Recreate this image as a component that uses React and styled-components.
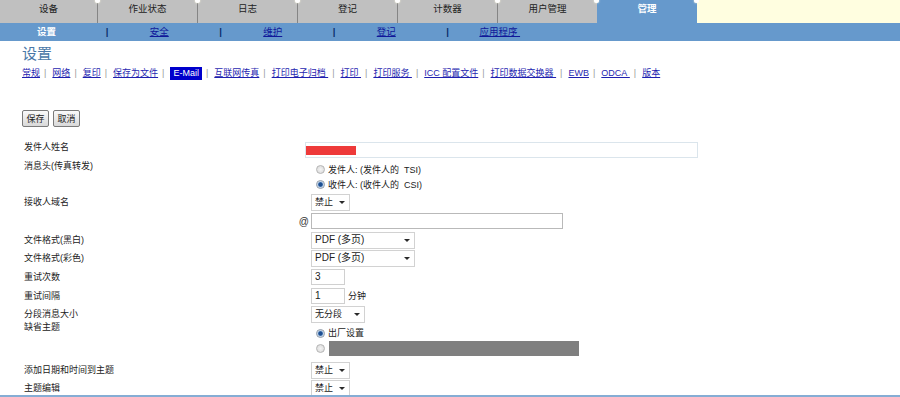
import React from 'react';
import styled, { createGlobalStyle, css } from 'styled-components';

//Styles

const GlobalStyle = createGlobalStyle`
  html, body {
    margin: 0;
    padding: 0;
    background: #fff;
  }
  body {
    font-family: "Liberation Sans", "Noto Sans CJK SC", sans-serif;
    font-size: 9px;
    color: #222;
  }
`;

const dot = css`
  &::before {
    content: '';
    position: absolute;
    top: -2px;
    left: -3px;
    width: 5px;
    height: 5px;
    border-radius: 50%;
    background: #fff;
    box-shadow: 0 0 2px #fffbe0;
  }
`;

//Components

const Frame = styled('div')`
  height: 397px;
  box-sizing: border-box;
  border-bottom: 2px solid #86add4;
  overflow: hidden;
`;

const TabBar = styled('div')`
  display: flex;
  height: 23px;
`;

const Tab = styled('div')`
  position: relative;
  flex: none;
  box-sizing: border-box;
  width: ${(p) => (p.$first ? 97 : 100)}px;
  padding-top: 3px;
  font-size: 9.5px;
  line-height: 12px;
  text-align: center;
  background: ${(p) => (p.$active ? '#6699cc' : '#c0c0c0')};
  color: ${(p) => (p.$active ? '#fff' : '#222')};
  font-weight: ${(p) => (p.$active ? 'bold' : 'normal')};
  ${(p) => !p.$first && !p.$active && css`border-left: 1px solid #858585;`}
  ${(p) => !p.$first && dot}
`;

const TabFiller = styled('div')`
  position: relative;
  flex: 1;
  background: #fffee0;
  ${dot}
`;

const SubBar = styled('div')`
  display: flex;
  align-items: center;
  height: 18px;
  background: #6699cc;
  font-size: 9.5px;
  line-height: 12px;
`;

const SubCurrent = styled('span')`
  width: 93px;
  text-align: center;
  color: #fff;
  font-weight: bold;
`;

const SubPipe = styled('span')`
  width: 28px;
  text-align: center;
  color: #0b2d6b;
  font-weight: bold;
`;

const SubLink = styled('a')`
  box-sizing: border-box;
  width: 85.5px;
  padding-right: 9px;
  text-align: center;
  color: #10189a;
  text-decoration: underline;
  cursor: pointer;
`;

const Main = styled('div')`
  padding-left: 22px;
`;

const Title = styled('h1')`
  margin: 3px 0 0;
  font-family: "Noto Sans CJK SC", sans-serif;
  font-size: 15px;
  line-height: 18px;
  font-weight: normal;
  color: #4a78a8;
`;

const NavRow = styled('div')`
  display: flex;
  align-items: center;
  margin-top: 4px;
  height: 14px;
  font-size: 9px;
  line-height: 13px;
`;

const NavLink = styled('a')`
  color: #1f1fb0;
  text-decoration: underline;
  cursor: pointer;
  white-space: pre;
  ${(p) =>
    p.$active &&
    css`
      padding: 0 3px;
      background: #0000cc;
      color: #fff;
      text-decoration: none;
    `}
`;

const NavSep = styled('span')`
  margin: 0 6px 0 4px;
  color: #999;
`;

const ButtonRow = styled('div')`
  display: flex;
  gap: 4px;
  margin-top: 30px;
`;

const Btn = styled('button')`
  width: 27px;
  height: 17px;
  padding: 0;
  border: 1px solid #7a7a7a;
  border-radius: 2px;
  background: linear-gradient(#fafafa, #d9d9d9);
  font-family: inherit;
  font-size: 9px;
  color: #222;
`;

const Form = styled('div')`
  display: grid;
  grid-template-columns: 287px 1fr;
  margin: 14px 0 0 2px;
`;

const Label = styled('div')`
  align-self: ${(p) => (p.$top ? 'start' : 'center')};
  margin-top: ${(p) => p.$shift || 0}px;
  line-height: 12px;
  color: #222;
`;

const AtLabel = styled('div')`
  align-self: center;
  padding-right: 2px;
  text-align: right;
  font-size: 10px;
  color: #333;
`;

const Cell = styled('div')`
  display: flex;
  flex-direction: ${(p) => (p.$column ? 'column' : 'row')};
  align-items: ${(p) => (p.$column ? 'stretch' : 'center')};
  box-sizing: border-box;
  height: ${(p) => p.$h}px;
  padding-top: ${(p) => p.$pt || 0}px;
`;

const SenderBox = styled('div')`
  align-self: flex-start;
  box-sizing: border-box;
  width: 393px;
  height: 16px;
  margin: 1px 0 0 -6px;
  border: 1px solid #dbe5ec;
`;

const Redact = styled('div')`
  width: 50px;
  height: 9px;
  margin: 3px 0 0 0;
  background: #ee3a3a;
`;

const RadioLine = styled('label')`
  display: flex;
  align-items: center;
  height: ${(p) => p.$h}px;
  line-height: 12px;
`;

const Radio = styled('span')`
  flex: none;
  box-sizing: border-box;
  width: 9px;
  height: 9px;
  margin: 0 3px 0 5px;
  border-radius: 50%;
  border: 1px solid ${(p) => (p.$checked ? '#8f9aa8' : '#b5b5b5')};
  background: ${(p) =>
    p.$checked
      ? 'radial-gradient(circle, #1d4f91 0 1.8px, #9dbde2 2.6px, #f2f2f2 3.6px)'
      : 'radial-gradient(circle, #f4f4f4 0, #dcdcdc 4px)'};
`;

const SelectBox = styled('div')`
  display: flex;
  align-items: center;
  justify-content: space-between;
  box-sizing: border-box;
  width: ${(p) => p.$w}px;
  height: 17px;
  padding: 0 4px 0 3px;
  border: 1px solid #d2d2d2;
  background: #fff;
  line-height: 12px;
  font-size: ${(p) => (p.$latin ? 10 : 9)}px;
`;

const Caret = styled('span')`
  width: 0;
  height: 0;
  margin-top: 1px;
  border-left: 3px solid transparent;
  border-right: 3px solid transparent;
  border-top: 3.5px solid #2a2a2a;
`;

const Field = styled('input')`
  box-sizing: border-box;
  width: ${(p) => p.$w}px;
  height: 16px;
  margin: 0;
  padding: 0 3px;
  border: 1px solid ${(p) => p.$border || '#d0d0d0'};
  font-family: inherit;
  font-size: 10px;
  color: #222;
  outline: none;
`;

const Unit = styled('span')`
  margin-left: 3px;
  line-height: 12px;
`;

const GrayBox = styled('div')`
  width: 250px;
  height: 15px;
  margin-left: 1px;
  background: #7f7f7f;
`;

const tabs = ['设备', '作业状态', '日志', '登记', '计数器', '用户管理', '管理'];
const subLinks = ['安全', '维护', '登记', '应用程序\u00a0'];
const navLinks = [
  '常规',
  '网络',
  '复印',
  '保存为文件',
  'E-Mail',
  '互联网传真',
  '打印电子归档\u00a0',
  '打印\u00a0',
  '打印服务\u00a0',
  'ICC 配置文件',
  '打印数据交换器\u00a0',
  'EWB',
  'ODCA\u00a0',
  '版本',
];

const Select = ({ w, text, latin }) => (
  <SelectBox $w={w} $latin={latin}>
    <span>{text}</span>
    <Caret />
  </SelectBox>
);

const App = () => {
  return (
    <Frame>
      <GlobalStyle />
      <TabBar>
        {tabs.map((t, i) => (
          <Tab key={t + i} $first={i === 0} $active={t === '管理'}>
            {t}
          </Tab>
        ))}
        <TabFiller />
      </TabBar>
      <SubBar>
        <SubCurrent>设置</SubCurrent>
        {subLinks.map((s) => (
          <React.Fragment key={s}>
            <SubPipe>|</SubPipe>
            <SubLink>{s}</SubLink>
          </React.Fragment>
        ))}
      </SubBar>
      <Main>
        <Title>设置</Title>
        <NavRow>
          {navLinks.map((n, i) => (
            <React.Fragment key={n}>
              {i > 0 && <NavSep>|</NavSep>}
              <NavLink $active={n === 'E-Mail'}>{n}</NavLink>
            </React.Fragment>
          ))}
        </NavRow>
        <ButtonRow>
          <Btn>保存</Btn>
          <Btn>取消</Btn>
        </ButtonRow>
        <Form>
          <Label $top>发件人姓名</Label>
          <Cell $h={19}>
            <SenderBox>
              <Redact />
            </SenderBox>
          </Cell>

          <Label $top>消息头(传真转发)</Label>
          <Cell $h={33} $pt={2} $column>
            <RadioLine $h={15}>
              <Radio />
              发件人: (发件人的&nbsp; TSI)
            </RadioLine>
            <RadioLine $h={15}>
              <Radio $checked />
              收件人: (收件人的&nbsp; CSI)
            </RadioLine>
          </Cell>

          <Label>接收人域名</Label>
          <Cell $h={18}>
            <Select w={39} text="禁止" />
          </Cell>

          <AtLabel>@</AtLabel>
          <Cell $h={20}>
            <Field $w={252} $border="#b9b9b9" readOnly value="" />
          </Cell>

          <Label>文件格式(黑白)</Label>
          <Cell $h={18}>
            <Select w={104} text="PDF (多页)" latin />
          </Cell>

          <Label>文件格式(彩色)</Label>
          <Cell $h={18}>
            <Select w={104} text="PDF (多页)" latin />
          </Cell>

          <Label>重试次数</Label>
          <Cell $h={19}>
            <Field $w={34} readOnly value="3" />
          </Cell>

          <Label>重试间隔</Label>
          <Cell $h={19}>
            <Field $w={34} readOnly value="1" />
            <Unit>分钟</Unit>
          </Cell>

          <Label>分段消息大小</Label>
          <Cell $h={18}>
            <Select w={54} text="无分段" />
          </Cell>

          <Label $top $shift={-2}>
            缺省主题
          </Label>
          <Cell $h={38} $pt={3} $column>
            <RadioLine $h={14}>
              <Radio $checked />
              出厂设置
            </RadioLine>
            <RadioLine $h={17}>
              <Radio />
              <GrayBox />
            </RadioLine>
          </Cell>

          <Label>添加日期和时间到主题</Label>
          <Cell $h={18}>
            <Select w={39} text="禁止" />
          </Cell>

          <Label>主题编辑</Label>
          <Cell $h={18}>
            <Select w={39} text="禁止" />
          </Cell>
        </Form>
      </Main>
    </Frame>
  );
};

export default App;
